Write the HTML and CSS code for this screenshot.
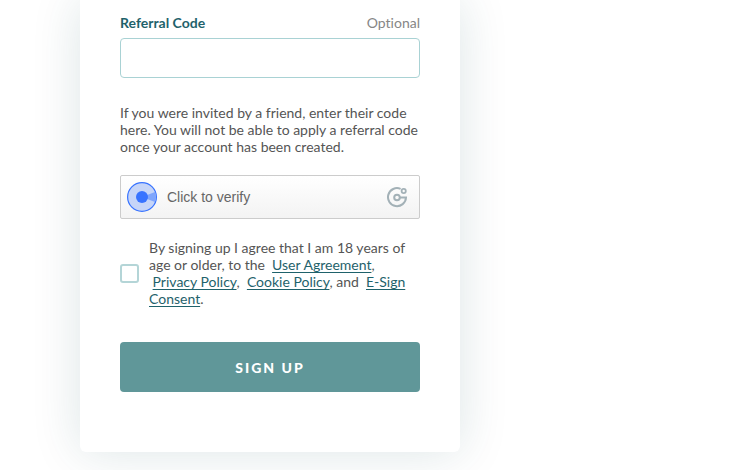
FILE: index.html
```html
<!DOCTYPE html>
<html lang="en">
<head>
<meta charset="utf-8">
<meta name="viewport" content="width=device-width, initial-scale=1">
<title>Sign up</title>
<link rel="stylesheet" href="styles.css">
</head>
<body>
<main class="page">
  <form class="card">
    <div class="field">
      <div class="field-head">
        <label class="field-label" for="referral">Referral Code</label>
        <span class="field-note">Optional</span>
      </div>
      <input class="field-input" id="referral" type="text">
    </div>
    <p class="hint">If you were invited by a friend, enter their code<br>here. You will not be able to apply a referral code<br>once your account has been created.</p>
    <button class="verify" type="button">
      <svg class="verify-radar" viewBox="0 0 30 30" aria-hidden="true">
        <path d="M15 15 28 9.5A14 14 0 0 1 28 20.5Z" fill="#80a6fc"/>
        <circle cx="15" cy="15" r="14.4" fill="#c6d5f8" stroke="#3873ff" stroke-width="1.2"/>
        <path d="M15 15 28 10A14 14 0 0 1 28 20Z" fill="#80a6fc"/>
        <circle cx="15" cy="15" r="6" fill="#3873ff"/>
      </svg>
      <span class="verify-text">Click to verify</span>
      <svg class="verify-logo" viewBox="0 0 21 21" fill="none" stroke="#a3b1b7" stroke-width="2" aria-hidden="true">
        <path d="M13.6 1.9A9 9 0 1 0 19 10.5H13"/>
        <circle cx="10" cy="10.5" r="2.8"/>
        <circle cx="16.7" cy="4" r="2.1" stroke-width="1.8"/>
      </svg>
    </button>
    <div class="consent">
      <input class="consent-box" id="agree" type="checkbox">
      <label class="consent-text" for="agree">By signing up I agree that I am 18 years of<br>age or older, to the&nbsp; <a href="#">User Agreement</a>,<br>&nbsp;<a href="#">Privacy Policy</a>,&nbsp; <a href="#">Cookie Policy</a>, and&nbsp; <a href="#">E-Sign<br>Consent</a>.</label>
    </div>
    <button class="submit" type="submit">SIGN UP</button>
  </form>
</main>
</body>
</html>
```
FILE: styles.css
```css
* {
  box-sizing: border-box;
}

body {
  margin: 0;
  background: #fff;
  color: #555;
  font-family: Lato, "Open Sans", sans-serif;
  font-size: 14px;
  font-variant-ligatures: none;
  line-height: 17px;
}

.page {
  padding: 0 80px 18px;
}

.card {
  display: flex;
  flex-direction: column;
  max-width: 380px;
  padding: 14px 40px 60px;
  border-radius: 0 0 6px 6px;
  background: #fff;
  box-shadow: 0 0 50px rgba(0, 72, 80, 0.14);
}

.field-head {
  display: flex;
  justify-content: space-between;
  margin-bottom: 7px;
}

.field-label {
  color: #1f626b;
  font-weight: 700;
}

.field-note {
  color: #868686;
}

.field-input {
  display: block;
  width: 100%;
  height: 40px;
  padding: 0 12px;
  border: 1px solid #a9d2d4;
  border-radius: 4px;
  background: #fff;
  font: inherit;
}

.hint {
  margin: 26px 0 20px;
}

.verify {
  display: flex;
  align-items: center;
  height: 44px;
  padding: 0 11px 0 6px;
  border: 1px solid #ccc;
  border-radius: 2px;
  background: linear-gradient(#fff, #f3f3f3);
  color: #666;
  font: 14px "Liberation Sans", Arial, sans-serif;
}

.verify-radar {
  width: 30px;
  height: 30px;
}

.verify-text {
  flex: 1;
  padding-left: 10px;
  text-align: left;
}

.verify-logo {
  width: 21px;
  height: 21px;
}

.consent {
  display: flex;
  align-items: center;
  gap: 10px;
  margin: 20px 0 35px;
}

.consent-box {
  flex: none;
  width: 19px;
  height: 19px;
  margin: 0;
  border: 2px solid #b4d5d7;
  border-radius: 3px;
  background: #fff;
  appearance: none;
}

.consent-box:checked {
  background: #609799;
}

.consent-text {
  white-space: nowrap;
}

.consent-text a {
  color: #1f626b;
  text-underline-offset: 2px;
  text-decoration-skip-ink: none;
}

.submit {
  height: 50px;
  border: 0;
  border-radius: 4px;
  background: #609799;
  color: #fff;
  font: 900 14px Lato, "Open Sans", sans-serif;
  letter-spacing: 2px;
}
```
